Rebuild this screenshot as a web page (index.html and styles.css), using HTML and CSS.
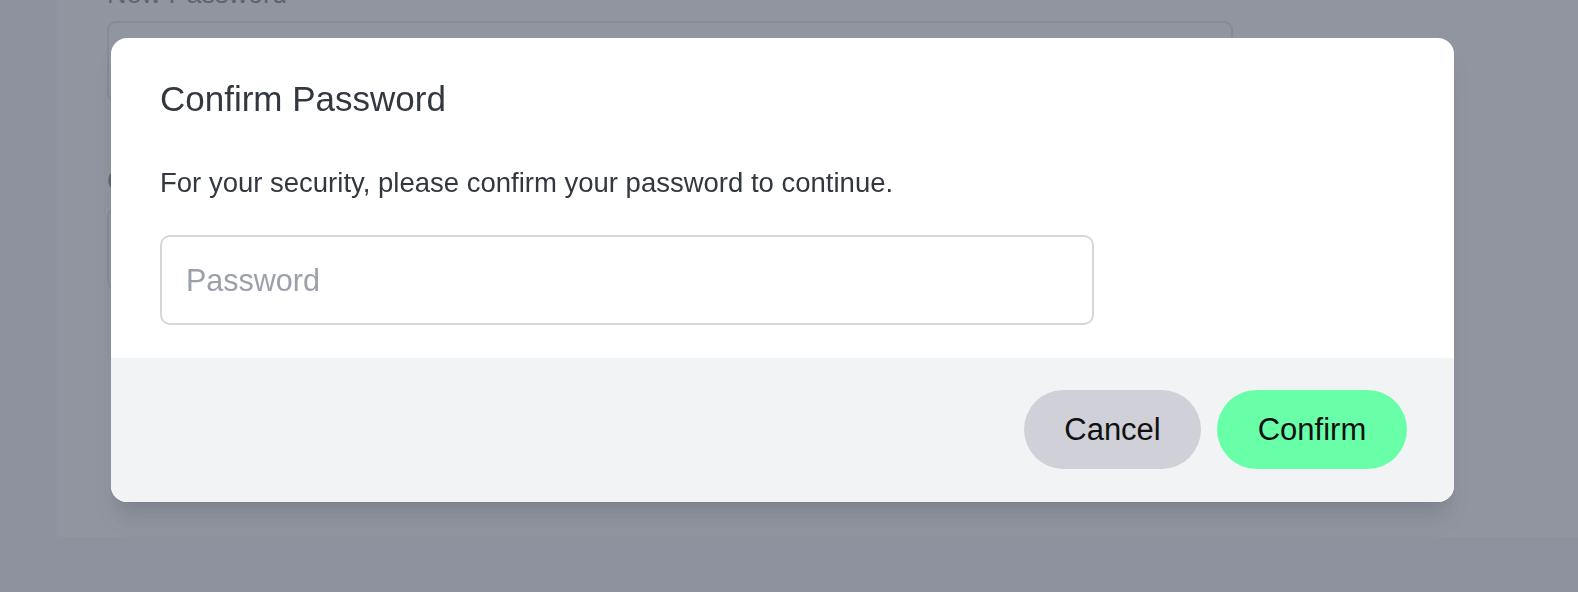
FILE: index.html
```html
<!DOCTYPE html>
<html lang="en">
<head>
<meta charset="utf-8">
<title>Confirm Password</title>
<link rel="stylesheet" href="styles.css">
</head>
<body>
<div class="page">
  <div class="panel">
    <div class="field">
      <label class="field-label">New Password</label>
      <div class="field-input"></div>
    </div>
    <div class="field">
      <label class="field-label">Confirm Password</label>
      <div class="field-input"></div>
    </div>
  </div>
</div>

<div class="overlay">
  <div class="modal">
    <div class="modal-body">
      <h2 class="modal-title">Confirm Password</h2>
      <p class="modal-text">For your security, please confirm your password to continue.</p>
      <input class="modal-input" type="password" placeholder="Password">
    </div>
    <div class="modal-footer">
      <button class="btn btn-cancel">Cancel</button>
      <button class="btn btn-confirm">Confirm</button>
    </div>
  </div>
</div>
</body>
</html>
```

FILE: styles.css
```css
html, body {
  margin: 0;
  padding: 0;
  height: 100%;
}

body {
  background: #f3f4f6;
  font-family: "Liberation Sans", Arial, sans-serif;
  overflow: hidden;
}

.page {
  padding-left: 57px;
}

.panel {
  background: #ffffff;
  margin-top: -24px;
  height: 561px;
  padding: 0 0 0 50px;
  box-sizing: border-box;
}

.field {
  width: 1126px;
}

.field-label {
  display: block;
  font-size: 27px;
  line-height: 36px;
  color: #374151;
}

.field-input {
  margin-top: 9px;
  height: 82px;
  border: 2px solid #d1d5db;
  border-radius: 9px;
  box-sizing: border-box;
}

.field + .field {
  margin-top: 60px;
}

.overlay {
  position: fixed;
  inset: 0;
  background: rgba(107, 114, 128, 0.75);
  padding: 38px 0 0 111px;
}

.modal {
  width: 1343px;
  background: #ffffff;
  border-radius: 16px;
  overflow: hidden;
  box-shadow: 0 20px 25px -5px rgba(0, 0, 0, 0.1), 0 10px 10px -5px rgba(0, 0, 0, 0.04);
}

.modal-body {
  padding: 41px 49px 33px 49px;
}

.modal-title {
  margin: 0;
  font-size: 35px;
  line-height: 40px;
  font-weight: 400;
  color: #333840;
}

.modal-text {
  margin: 46px 0 0 0;
  font-size: 27.5px;
  line-height: 36px;
  color: #333840;
}

.modal-input {
  display: block;
  margin-top: 34px;
  width: 934px;
  height: 90px;
  box-sizing: border-box;
  border: 2px solid #d5d7dc;
  border-radius: 10px;
  padding: 0 24px;
  font-family: "Liberation Sans", Arial, sans-serif;
  font-size: 30.5px;
  color: #333840;
  background: #ffffff;
  outline: none;
}

.modal-input::placeholder {
  color: #9ca0ab;
}

.modal-footer {
  background: #f2f3f5;
  padding: 32px 47px 33px 0;
  display: flex;
  justify-content: flex-end;
  gap: 16px;
}

.btn {
  height: 79px;
  border: none;
  border-radius: 40px;
  font-family: "Liberation Sans", Arial, sans-serif;
  font-size: 31px;
  line-height: 79px;
  padding: 0;
  color: #111111;
  cursor: pointer;
}

.btn-cancel {
  width: 177px;
  background: #cfd0d8;
}

.btn-confirm {
  width: 190px;
  background: #68ffa8;
}
```
